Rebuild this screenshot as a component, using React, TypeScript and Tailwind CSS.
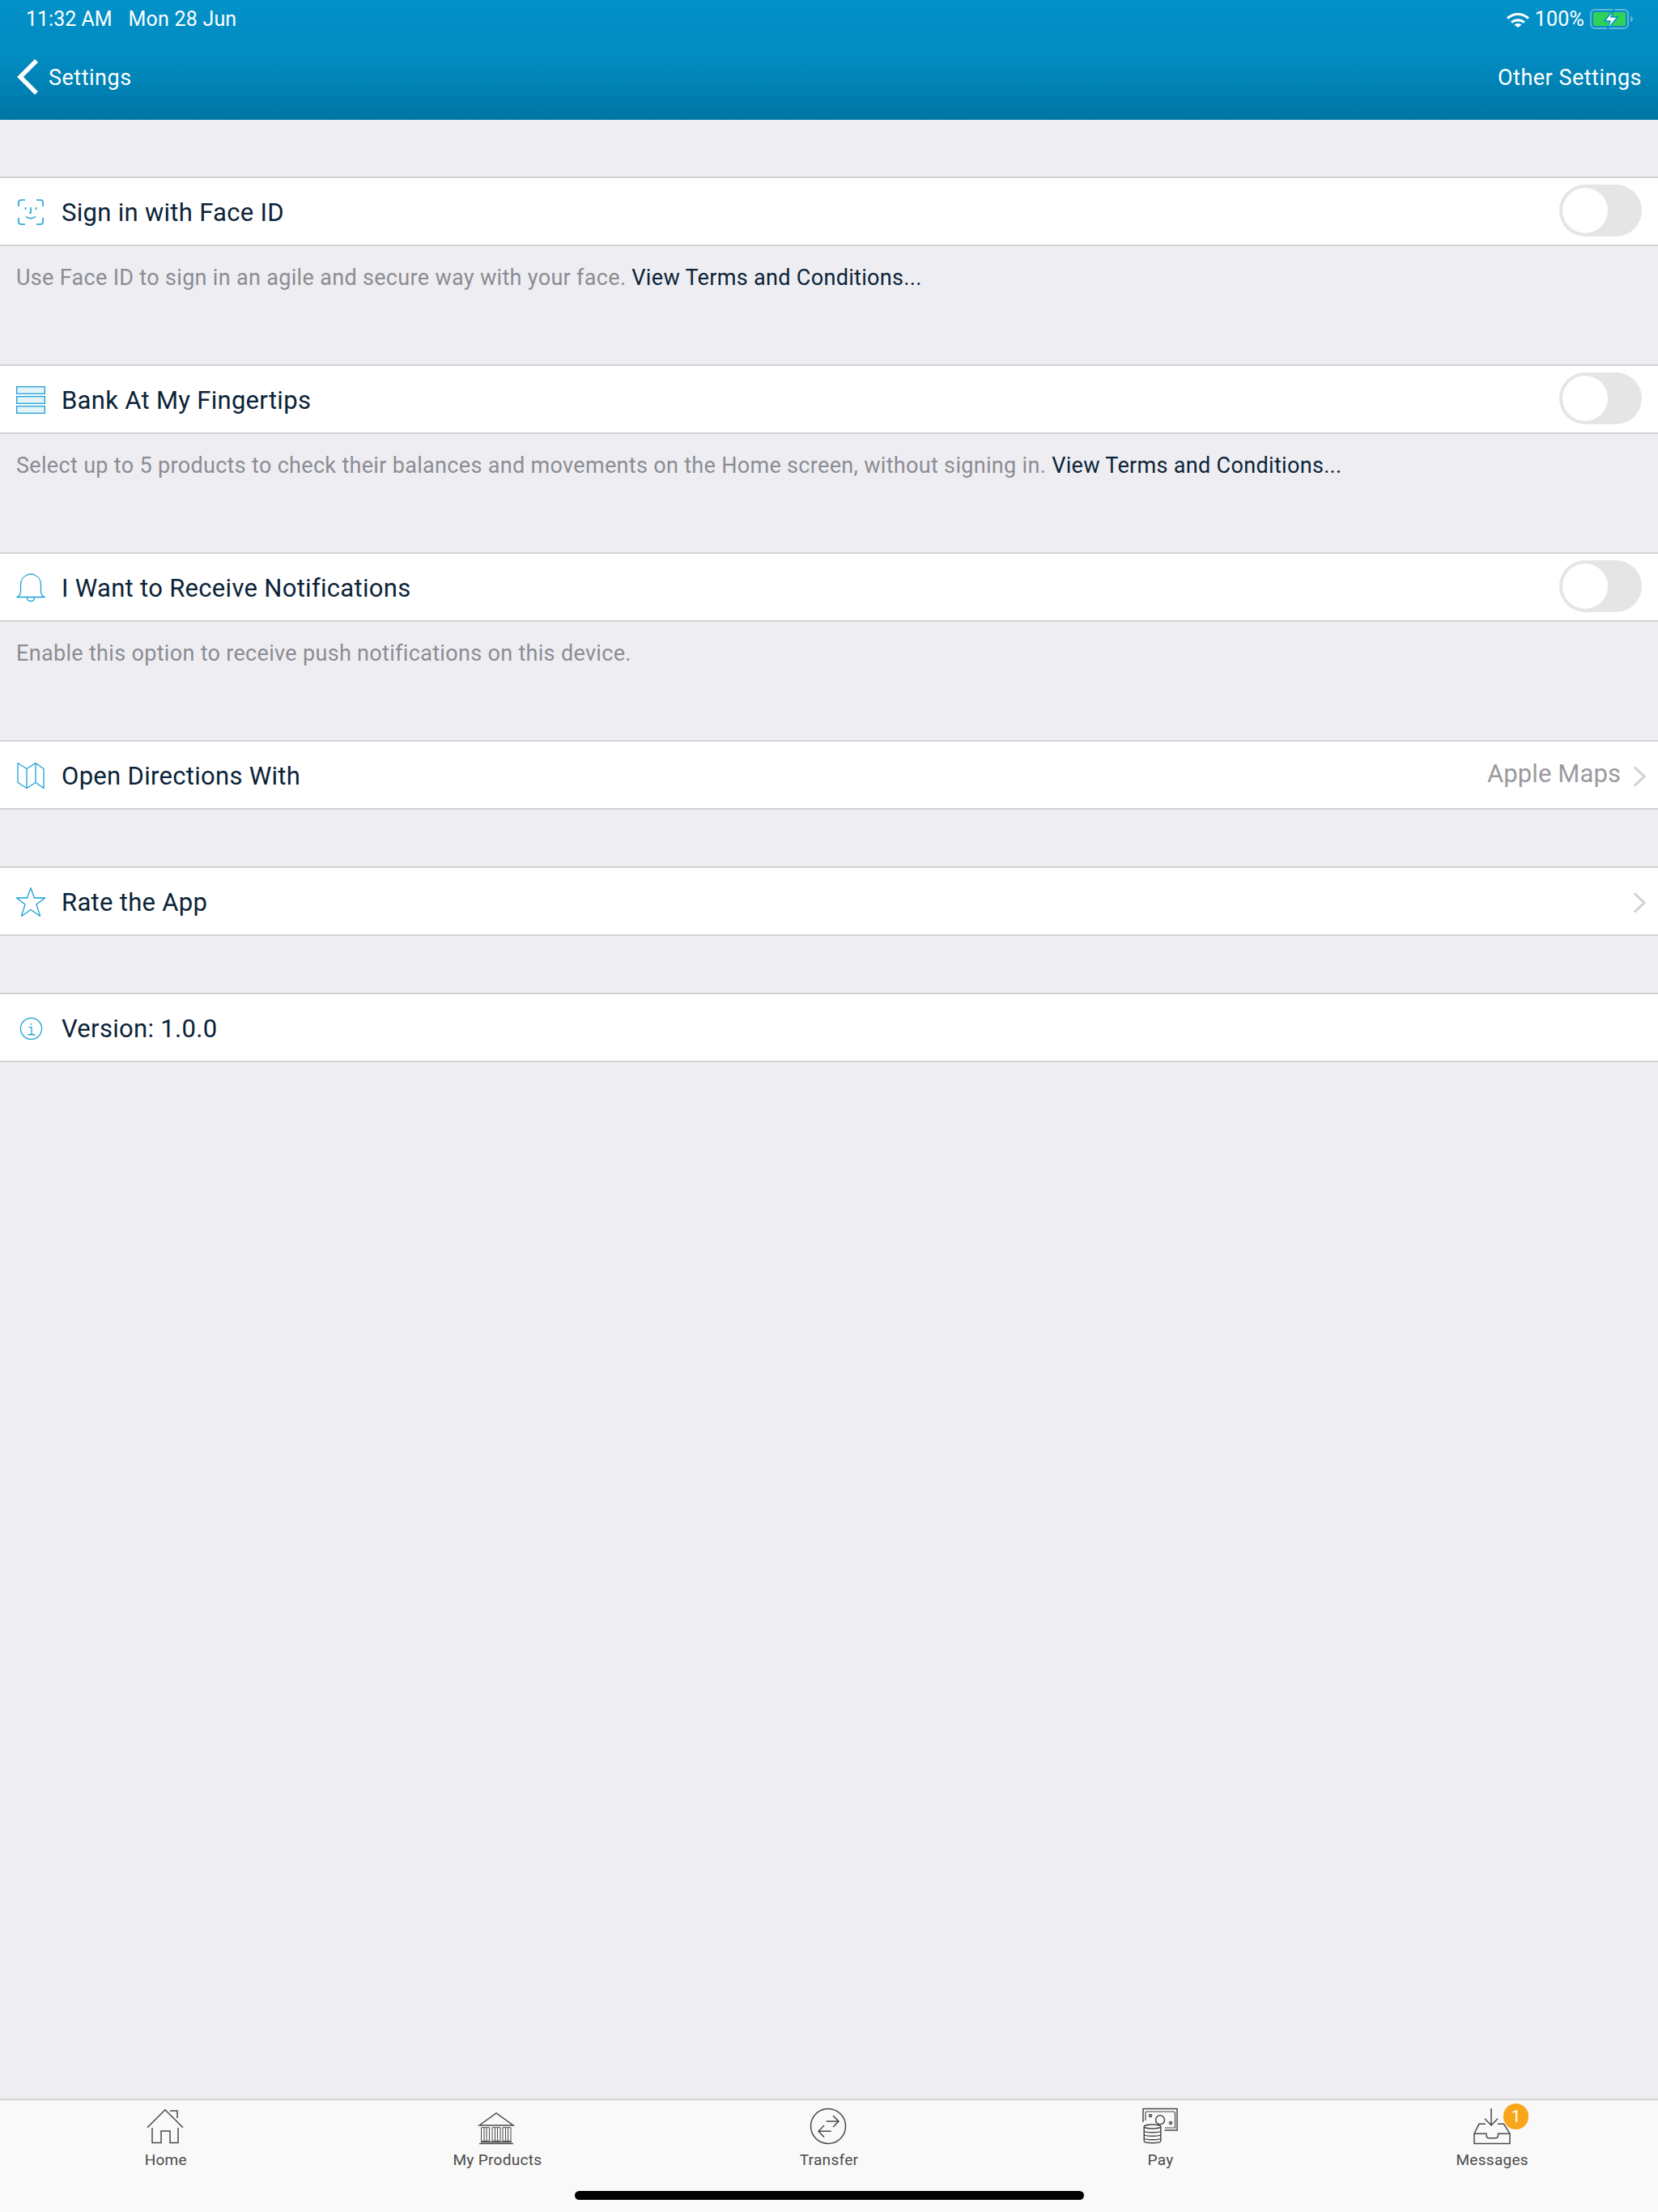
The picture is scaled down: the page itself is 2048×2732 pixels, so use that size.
import React from 'react';

const FONT = "font-['Roboto',sans-serif]";

const Toggle = () => (
  <div className="w-[102px] h-[64px] -mt-1 rounded-full bg-[#e5e5e5] p-1 flex items-center">
    <div className="w-[56px] h-[56px] rounded-full bg-white" />
  </div>
);

const Chevron = () => (
  <svg className="-mr-[5px] mt-[2px]" width="16" height="26" viewBox="0 0 16 26" fill="none" stroke="#d1d1d6" strokeWidth="3">
    <path d="M2 1.500L14 13 2 24.500" />
  </svg>
);

const iconProps = { fill: 'none', stroke: '#1c9fd3', strokeWidth: 1.3 };

const FaceIcon = () => (
  <svg width="32" height="32" viewBox="0 0 32 32" {...iconProps} strokeWidth={1.6}>
    <path d="M1 9V4a3 3 0 0 1 3-3h5M23 1h5a3 3 0 0 1 3 3v5M31 23v5a3 3 0 0 1-3 3h-5M9 31H4a3 3 0 0 1-3-3v-5" />
    <path d="M9.500 10v3M22.500 10v3M16 10v7h-2M10 21.500c3.500 3 8.500 3 12 0" />
  </svg>
);

const StackIcon = () => (
  <svg width="36" height="34" viewBox="0 0 36 34" {...iconProps}>
    <rect x="0.700" y="0.700" width="34.600" height="8.600" fill="#e6f4fa" />
    <rect x="0.700" y="12.700" width="34.600" height="8.600" fill="#e6f4fa" />
    <rect x="0.700" y="24.700" width="34.600" height="8.600" fill="#e6f4fa" />
  </svg>
);

const BellIcon = () => (
  <svg width="36" height="36" viewBox="0 0 36 36" {...iconProps}>
    <path d="M.500 29.500c3-1 5-3 5-7v-8C5.500 7 10 3.500 13 2.500c2-2 8-2 10 0 3 1 7.500 4.500 7.500 12v8c0 4 2 6 5 7z" />
    <path d="M13.500 30c0 6 9 6 9 0" />
  </svg>
);

const MapIcon = () => (
  <svg width="34" height="34" viewBox="0 0 34 34" {...iconProps}>
    <path d="M1 1.500l11 7 11-7 10 7v24l-10-7-11 7-11-7zM12 8.500v24M23 1.500v24" strokeLinejoin="round" />
  </svg>
);

const StarIcon = () => (
  <svg width="36" height="36" viewBox="0 0 36 36" {...iconProps}>
    <path d="M18 .800L22.500 13H35.500L25 21l4.500 14.500L18 27.500 6.500 35.500 11 21 .500 13H13.500z" />
  </svg>
);

const InfoIcon = () => (
  <svg width="29" height="29" viewBox="0 0 30 30" {...iconProps}>
    <circle cx="15" cy="15" r="13.500" />
    <path d="M12 13h3.500v9M11 22.500h9M15 8v2" />
  </svg>
);

const Row = ({ icon, label, right }: { icon: React.ReactNode; label: string; right?: React.ReactNode }) => (
  <div className="h-[86px] bg-white border-y-2 border-[#d3d3d6] flex items-center pl-5 pr-5 pt-[2px]">
    <div className="w-[36px] flex justify-center shrink-0">{icon}</div>
    <span className="ml-[20px] mt-[2px] text-[31px] text-[#0b2338] tracking-[0.3px]">{label}</span>
    <div className="ml-auto flex items-center">{right}</div>
  </div>
);

const Description = ({ text, link }: { text: string; link?: string }) => (
  <div className="h-[146px] pl-5 pt-[21px] text-[27px] leading-[36px] text-[#8c8c92] tracking-[0.32px]">
    {text} {link && <span className="text-[#0b2338]">{link}</span>}
  </div>
);

const TABS: { label: string; icon: React.ReactNode; badge?: string }[] = [
  {
    label: 'Home',
    icon: <path d="M2 27.700L24 5.700l22 22M30 7h9v9M8 28v18.500h11V32h11v14.500h10V28" />,
  },
  {
    label: 'My Products',
    icon: (
      <>
        <path d="M3 25L24 10l21 15zM3 47.500h42M5 45.500h38" />
        <path d="M5.500 27.700h10V44.300h-10zM19 27.700h10V44.300H19zM32 27.700h10V44.300H32zM9 27.700V44.300M12 27.700V44.300M22.500 27.700V44.300M25.500 27.700V44.300M35.500 27.700V44.300M38.500 27.700V44.300" strokeWidth="1" />
      </>
    ),
  },
  {
    label: 'Transfer',
    icon: (
      <>
        <circle cx="24" cy="26" r="21.500" />
        <path d="M21.700 20H37M30 13l7 7-7 7M27.700 32.300H12M19 25l-7 7.300 7 7.200" />
      </>
    ),
  },
  {
    label: 'Pay',
    icon: (
      <>
        <path d="M3 21V4.500h42V31H29.500" />
        <path d="M6 19V10q0-2 2-2h32.500q2 0 2 2v18H30" strokeWidth="1.200" />
        <circle cx="24" cy="18.300" r="5.500" />
        <circle cx="12" cy="13" r="1.500" />
        <circle cx="37" cy="22" r="1.500" />
        <ellipse cx="14.500" cy="26.500" rx="10.300" ry="2.500" />
        <path d="M4.200 26.500v17.700c0 3.300 20.600 3.300 20.600 0V26.500M4.200 31.500c0 3 20.600 3 20.600 0M4.200 36c0 3 20.600 3 20.600 0M4.200 40.500c0 3 20.600 3 20.600 0" />
      </>
    ),
  },
  {
    label: 'Messages',
    icon: (
      <>
        <path d="M24 4v21M16 16.700l8 8.300 8-8.300" />
        <path d="M17 23.300H9L3 35.200V47.500H47V35.200L39.500 23.300H32M3 35.200H18v2q0 3.500 3.500 3.500H29q3.500 0 3.500-3.500v-2H47" />
      </>
    ),
    badge: '1',
  },
];

export default function App() {
  return (
    <div className={`w-[2048px] h-[2732px] bg-[#eeeef2] flex flex-col ${FONT}`}>
      <header className="h-[148px] shrink-0 bg-gradient-to-b from-[#0291c9] via-[#028bc0] to-[#0076a4] text-white flex flex-col">
        <div className="h-[46px] pt-[2px] flex items-center justify-between pl-8 pr-[30px] text-[25px]">
          <div className="flex gap-[20px]">
            <span>11:32 AM</span>
            <span className="tracking-[0.2px]">Mon 28 Jun</span>
          </div>
          <div className="flex items-center gap-[7px]">
            <svg width="28" height="20" viewBox="0 0 28 20" fill="white">
              <path d="M0 7.500C7.500 0 20.500 0 28 7.500l-2.200 2.300C19.500 3.500 8.500 3.500 2.200 9.800zM5 12.500c5-4.500 13-4.500 18 0l-2.300 2.300c-3.500-3-9.900-3-13.400 0zM9.500 16.500c2.500-2 6.500-2 9 0L14 20z" />
            </svg>
            <span className="tracking-[0.2px]">100%</span>
            <svg width="54" height="26" viewBox="0 0 54 26">
              <rect x="1" y="1" width="46" height="23" rx="5" fill="none" stroke="#5fb4d8" strokeWidth="2" />
              <rect x="4" y="4" width="40" height="17" rx="2" fill="#30d158" />
              <path d="M50 9c2 .5 3 2 3 3.500S52 15.500 50 16z" fill="#5fb4d8" />
              <path d="M30 0L18 15h7l-4 11 13-16h-8z" fill="white" stroke="#0291c9" strokeWidth="1.500" />
            </svg>
          </div>
        </div>
        <div className="flex-1 flex items-center justify-between pl-5 pr-5 pb-1 text-[27px] tracking-[0.5px]">
          <div className="flex items-center gap-[12px]">
            <svg width="28" height="46" viewBox="0 0 28 46" fill="none" stroke="white" strokeWidth="5.500">
              <path d="M25 3L5 23l20 20" />
            </svg>
            <span className="mt-[3px]">Settings</span>
          </div>
          <span className="mt-[3px]">Other Settings</span>
        </div>
      </header>

      <main className="flex-1 pt-[70px]">
        <Row icon={<FaceIcon />} label="Sign in with Face ID" right={<Toggle />} />
        <Description text="Use Face ID to sign in an agile and secure way with your face." link="View Terms and Conditions..." />
        <Row icon={<StackIcon />} label="Bank At My Fingertips" right={<Toggle />} />
        <Description text="Select up to 5 products to check their balances and movements on the Home screen, without signing in." link="View Terms and Conditions..." />
        <Row icon={<BellIcon />} label="I Want to Receive Notifications" right={<Toggle />} />
        <Description text="Enable this option to receive push notifications on this device." />
        <Row
          icon={<MapIcon />}
          label="Open Directions With"
          right={
            <>
              <span className="text-[31px] text-[#9a9a9e] tracking-[0.1px] mr-[15px] -mt-[3px]">Apple Maps</span>
              <Chevron />
            </>
          }
        />
        <div className="h-[70px]" />
        <Row icon={<StarIcon />} label="Rate the App" right={<Chevron />} />
        <div className="h-[70px]" />
        <Row icon={<InfoIcon />} label="Version: 1.0.0" />
      </main>

      <footer className="h-[140px] shrink-0 bg-[#f9f9f9] border-t-2 border-[#d3d3d6] relative">
        <div className="grid grid-cols-5 pt-[6px]">
          {TABS.map((t) => (
            <div key={t.label} className="flex flex-col items-center text-[#4a4a4a] text-[19px] leading-[18px] tracking-[0.3px]">
              <div className="relative w-[50px] h-[59px]">
                <svg width="50" height="59" viewBox="0 0 50 59" fill="none" stroke="#4a4a4a" strokeWidth="1.500">
                  {t.icon}
                </svg>
                {t.badge && (
                  <span className="absolute -top-[2px] -right-[20px] w-[31px] h-[32px] rounded-full bg-[#f9a61a] text-white text-[20px] leading-[32px] text-center">
                    {t.badge}
                  </span>
                )}
              </div>
              <span>{t.label}</span>
            </div>
          ))}
        </div>
        <div className="absolute left-[710px] top-[112px] w-[629px] h-[11px] rounded-full bg-black" />
      </footer>
    </div>
  );
}
